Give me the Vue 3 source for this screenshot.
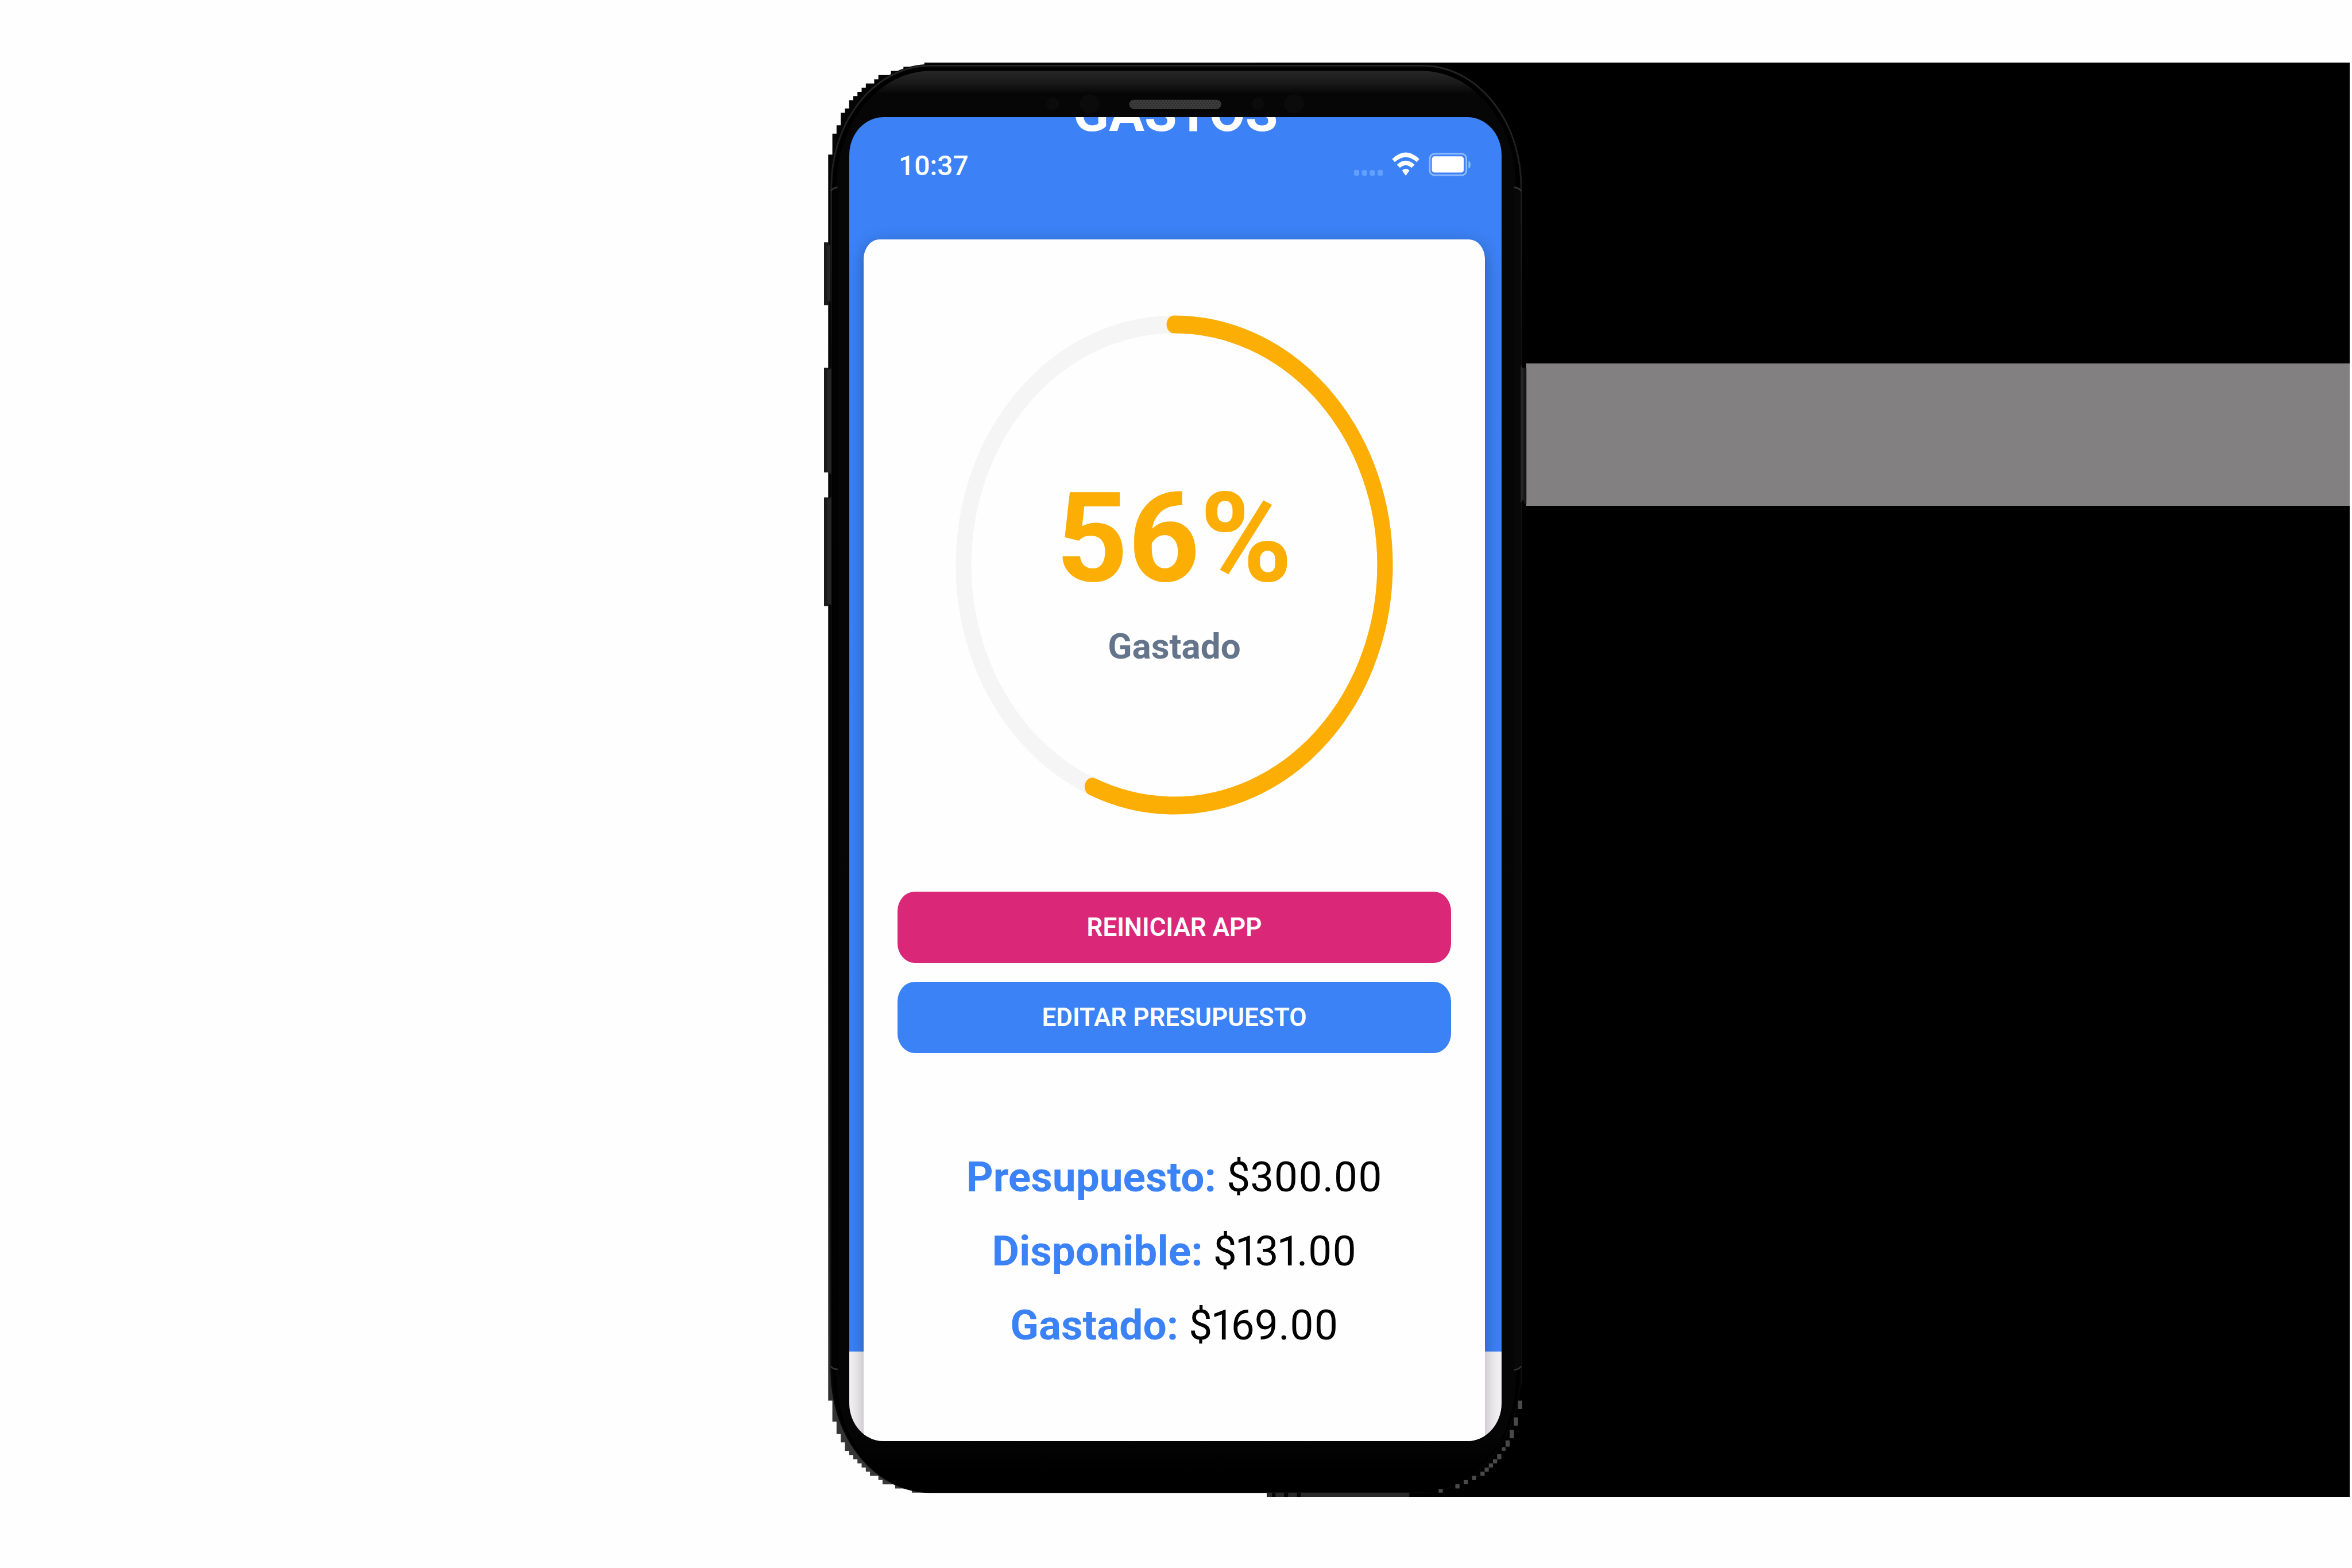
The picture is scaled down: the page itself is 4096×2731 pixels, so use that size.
<script setup>
import { computed, ref } from 'vue'

const budget = ref(300)
const spent = ref(169)

const percent = computed(() => Math.round((spent.value / budget.value) * 100))
const money = (n) => '$' + n.toFixed(2)

const summary = computed(() => [
  { label: 'Presupuesto:', value: money(budget.value) },
  { label: 'Disponible:', value: money(budget.value - spent.value) },
  { label: 'Gastado:', value: money(spent.value) },
])

const radius = 419
const circumference = 2 * Math.PI * radius
const arc = computed(() => (circumference * spent.value) / budget.value)

/* Pixel blocks along the lower right edge of the case: x, y, width, height */
const blocks = [
  [2904, 2680, 8, 16], [2896, 2712, 8, 16], [2888, 2736, 8, 16], [2880, 2756, 8, 12],
  [2873, 2769, 7, 7], [2864, 2782, 8, 10], [2856, 2792, 8, 8], [2848, 2800, 8, 8],
  [2840, 2808, 8, 8], [2832, 2816, 8, 8], [2816, 2824, 8, 8], [2800, 2832, 8, 8],
  [2784, 2840, 8, 8], [2752, 2849, 8, 7],
]
</script>

<template>
  <main class="stage">
    <div class="backdrop" aria-hidden="true"><div class="band"></div></div>

    <section class="device">
      <svg class="case" viewBox="1576 120 1347 2744" preserveAspectRatio="none" aria-hidden="true">
        <defs>
          <linearGradient id="topShade" x1="0" y1="0" x2="0" y2="1">
            <stop offset="0" stop-color="#262626" />
            <stop offset="0.12" stop-color="#1c1c1c" />
            <stop offset="0.2" stop-color="#0a0a0a" />
            <stop offset="1" stop-color="#060606" />
          </linearGradient>
          <linearGradient id="stairs" gradientUnits="userSpaceOnUse" x1="0" y1="120" x2="0" y2="2856">
            <stop offset="0" stop-color="#050505" />
            <stop offset="0.6" stop-color="#080808" />
            <stop offset="0.9" stop-color="#2c2c2c" />
            <stop offset="1" stop-color="#3a3a3a" />
          </linearGradient>
          <linearGradient id="faceShade" x1="0" y1="0" x2="0" y2="1">
            <stop offset="0" stop-color="#262626" />
            <stop offset="0.008" stop-color="#1a1a1a" />
            <stop offset="0.016" stop-color="#060606" />
            <stop offset="0.96" stop-color="#060506" />
            <stop offset="0.985" stop-color="#010001" />
          </linearGradient>
          <pattern id="mesh" width="6" height="8" patternUnits="userSpaceOnUse">
            <rect width="6" height="8" fill="#3e3e3e" />
            <circle cx="1.5" cy="2" r="1.4" fill="#262626" />
            <circle cx="4.5" cy="6" r="1.4" fill="#262626" />
          </pattern>
        </defs>

        <path
          fill="url(#stairs)"
          d="M2400 120H1768V128H1728V136H1704V144H1680V152H1672V160H1656V168H1648V176H1640V184H1632V192H1624V208H1616V216H1608V240H1600V256H1592V296H1584V2680H1592V2720H1600V2744H1608V2760H1616V2776H1624V2784H1632V2792H1640V2800H1648V2808H1656V2816H1664V2824H1680V2832H1688V2840H1712V2848H1744V2856H2400Z"
        />
        <g fill="#1a1a1a">
          <rect x="1576" y="464" width="10" height="120" />
          <rect x="1576" y="704" width="10" height="200" />
          <rect x="1576" y="952" width="10" height="208" />
        </g>

        <path fill="#000" d="M2400 120H2760V134H2400Z" />
        <rect x="1589" y="123" width="1322" height="2733" rx="190" ry="234" fill="#020202" />
        <rect x="1590" y="126" width="1320" height="2729" rx="189" ry="232" fill="none" stroke="url(#topShade)" stroke-width="3" />
        <rect x="1594" y="131" width="1312" height="2724" rx="185" ry="227" fill="#000" />
        <rect x="1600" y="136" width="1300" height="2719" rx="180" ry="222" fill="url(#faceShade)" />
        <rect x="1592" y="360" width="12" height="2260" fill="#020202" />
        <rect x="2897" y="360" width="12" height="2260" fill="#080808" />
        <path d="M1589 366q4-7 13-7M2910 366q-4-7-14-7M1589 2614q4 6 13 6M2910 2614q-4 7-14 7" fill="none" stroke="#333" stroke-width="3" />
        <path d="M2911 366V2650" stroke="#1e1e1e" stroke-width="1" />

        <g fill="#262626">
          <path d="M1582 472l6-4v110l-6-4zM1582 710l8-6v204l-8-6zM1582 957l8-6v208l-8-6z" />
          <path d="M2909 700l6 6v250l-6 6z" />
        </g>
        <rect x="2915" y="704" width="5" height="260" fill="#161616" />

        <ellipse cx="2014" cy="199" rx="12" ry="12" fill="#0c0b0b" />
        <ellipse cx="2084" cy="199" rx="19" ry="18" fill="#0c0b0b" />
        <ellipse cx="2406" cy="199" rx="12" ry="12" fill="#0c0b0b" />
        <ellipse cx="2475" cy="199" rx="19" ry="18" fill="#0c0b0b" />
        <rect x="2160" y="191" width="176" height="18" rx="9" fill="url(#mesh)" />

        <g fill="#4a4a4a">
          <rect v-for="(b, i) in blocks" :key="i" :x="b[0]" :y="b[1]" :width="b[2]" :height="b[3]" />
        </g>

        <rect x="2424" y="2856" width="272" height="8" fill="#2b2a2b" />
        <path d="M2433 2856h7v8h-7zM2456 2856h8v8h-8zM2481 2856h7v8h-7z" fill="#060606" />
      </svg>

      <div class="screen">
        <h1 class="title">GASTOS</h1>

        <div class="status">
          <time class="clock">10:37</time>
          <svg class="indicators" viewBox="2591 291 223 46" aria-hidden="true">
            <g fill="#62a0fb">
              <rect x="2591" y="325" width="10" height="11" rx="3" />
              <rect x="2606" y="325" width="10" height="11" rx="4" />
              <rect x="2621" y="325" width="10" height="11" rx="4" />
              <rect x="2636" y="325" width="10" height="11" rx="3" />
            </g>
            <g fill="#fff">
              <path d="M2664 304Q2690 279 2716 304L2711 310Q2690 291 2669 310Z" />
              <path d="M2673 315Q2690 299 2707 315L2701 321Q2690 311 2679 321Z" />
              <path d="M2683 326Q2690 319 2697 326L2690 336Z" />
              <rect x="2740" y="299" width="61" height="31" rx="5" />
            </g>
            <rect x="2736" y="294" width="70" height="41" rx="9" fill="none" stroke="#8fbbff" stroke-width="3" />
            <path d="M2810 308q4 1 4 7t-4 7z" fill="#8fbbff" />
          </svg>
        </div>

        <article class="card">
          <div class="ring">
            <svg class="dial" viewBox="0 0 870 870" preserveAspectRatio="none" aria-hidden="true">
              <circle cx="435" cy="435" :r="radius" fill="none" stroke="#f5f5f5" stroke-width="31" />
              <circle
                cx="435"
                cy="435"
                :r="radius"
                fill="none"
                stroke="#fcae04"
                stroke-width="31"
                stroke-linecap="round"
                :stroke-dasharray="`${arc} ${circumference}`"
                transform="rotate(-90 435 435)"
              />
            </svg>
            <div class="reading">
              <strong class="percent">{{ percent }}%</strong>
              <span class="caption">Gastado</span>
            </div>
          </div>

          <div class="actions">
            <button type="button" class="btn reset">REINICIAR APP</button>
            <button type="button" class="btn edit">EDITAR PRESUPUESTO</button>
          </div>

          <div class="summary">
            <p v-for="row in summary" :key="row.label" class="line">
              <b>{{ row.label }}</b> {{ row.value }}
            </p>
          </div>
        </article>
      </div>
    </section>
  </main>
</template>

<style>
body {
  background: #fefefe;
}
</style>

<style scoped>
.stage {
  position: relative;
  display: flex;
  justify-content: center;
  padding: 109px 0 124px;
  font-family: Roboto, 'Liberation Sans', sans-serif;
}

.backdrop {
  position: absolute;
  top: 109px;
  right: 4px;
  bottom: 124px;
  left: calc(50% + 158px);
  background: #000;
}

.band {
  height: 248px;
  margin: 524px 0 0 452px;
  background: #828080;
}

.device {
  position: relative;
  box-sizing: border-box;
  width: 1226px;
  padding: 95px 46px 97px 44px;
}

.case {
  position: absolute;
  inset: 0;
  width: 100%;
  height: 100%;
}

.screen {
  position: relative;
  overflow: hidden;
  border-radius: 60px / 66px;
  background: linear-gradient(#3c82f6 2150px, #f4f2f4 2150px);
}

.title {
  margin: -57px 0 0;
  font-size: 92px;
  font-weight: 700;
  line-height: 100px;
  text-align: center;
  color: #fff;
}

.status {
  display: flex;
  justify-content: space-between;
  align-items: flex-start;
  box-sizing: border-box;
  height: 170px;
  padding: 12px 54px 0 86px;
}

.clock {
  font-size: 48px;
  font-weight: 500;
  line-height: 60px;
  color: #fff;
}

.indicators {
  width: 203px;
  height: 42px;
  margin-top: 6px;
}

.card {
  margin: 0 29px 0 25px;
  padding: 132px 59px 136px;
  border-radius: 28px 28px 0 0 / 34px 34px 0 0;
  background: #fefefe;
  box-shadow: 0 8px 30px rgba(0, 0, 0, 0.3);
}

.ring {
  display: grid;
  width: 762px;
  height: 870px;
  margin: 0 auto;
}

.dial,
.reading {
  grid-area: 1 / 1;
}

.dial {
  width: 100%;
  height: 100%;
}

.reading {
  display: flex;
  flex-direction: column;
  align-items: center;
  gap: 48px;
  padding-top: 284px;
}

.percent {
  font-size: 218px;
  font-weight: 700;
  line-height: 210px;
  color: #fcae04;
}

.caption {
  font-size: 62px;
  font-weight: 700;
  line-height: 70px;
  color: #64748b;
}

.actions {
  display: flex;
  flex-direction: column;
  gap: 33px;
  margin-top: 134px;
}

.btn {
  height: 124px;
  padding: 0;
  border: 0;
  border-radius: 30px / 34px;
  font-family: inherit;
  font-size: 44px;
  font-weight: 600;
  color: #fff;
}

.reset {
  background: #db2777;
}

.edit {
  background: #3b82f6;
}

.summary {
  margin-top: 152px;
  padding-bottom: 1px;
}

.line {
  margin: 0;
  font-size: 73px;
  font-variant-numeric: proportional-nums;
  line-height: 129px;
  text-align: center;
  color: #020202;
}

.line b {
  font-weight: 700;
  color: #3b82f6;
}
</style>
